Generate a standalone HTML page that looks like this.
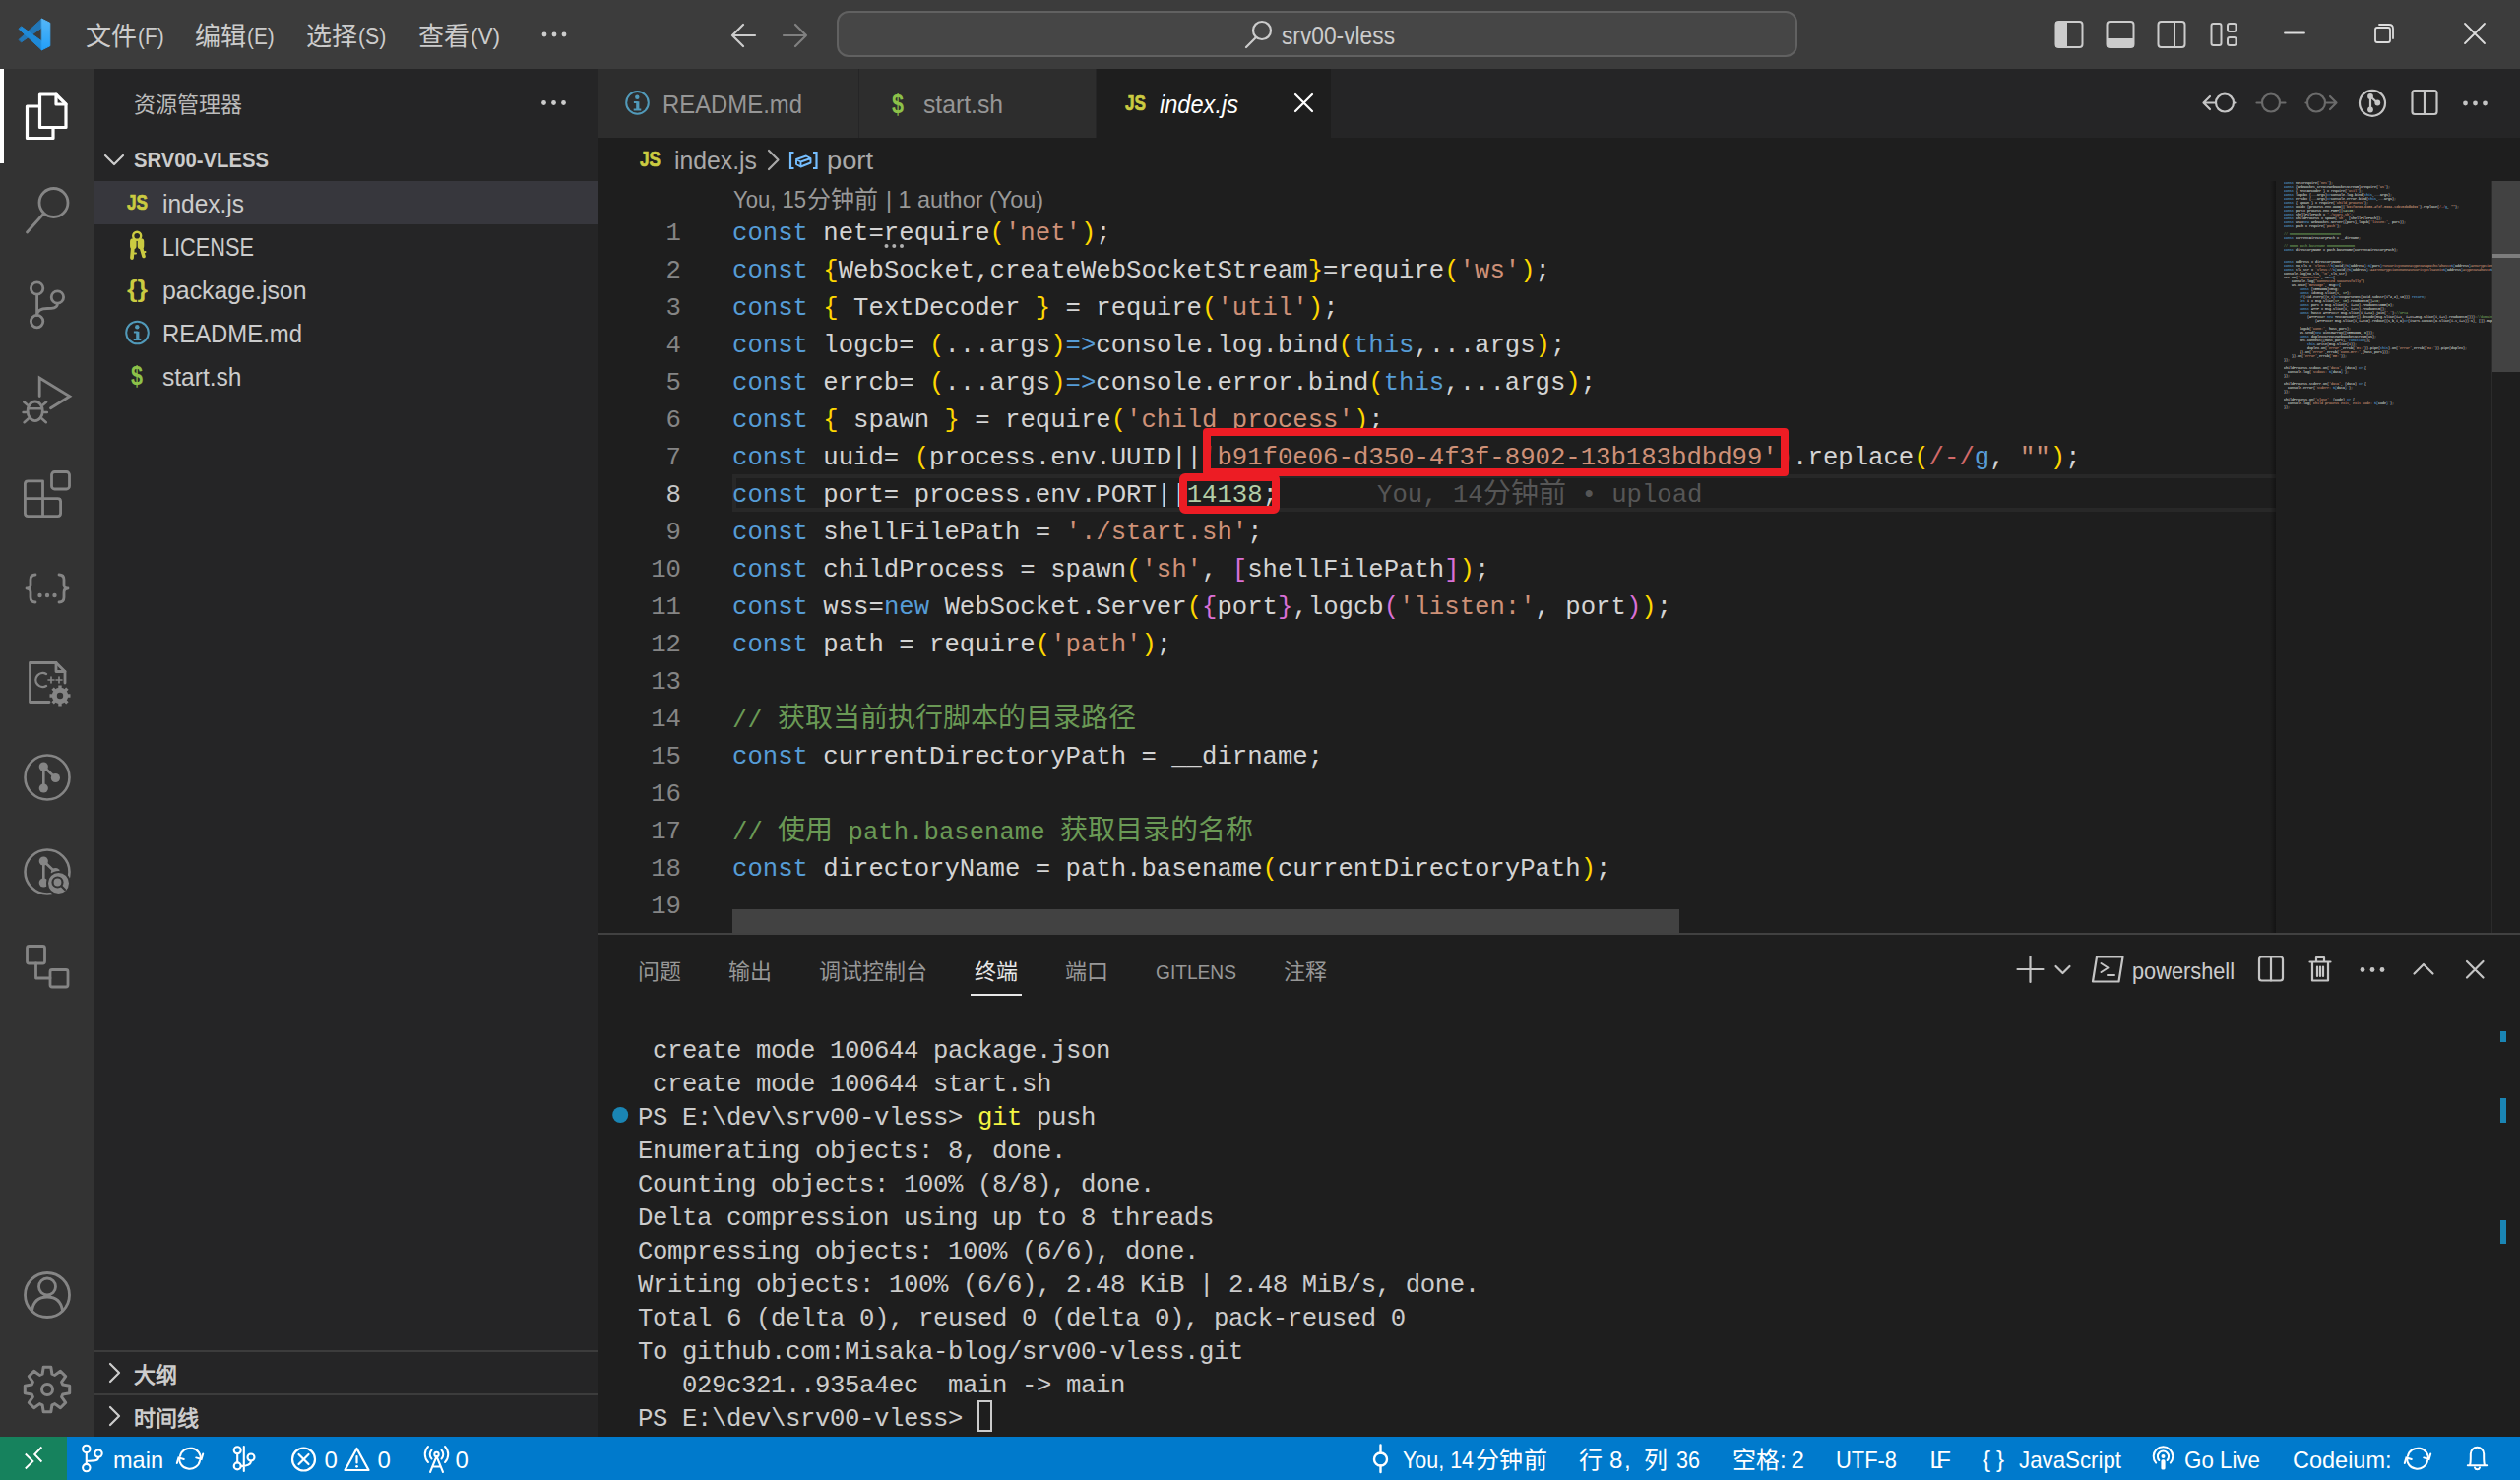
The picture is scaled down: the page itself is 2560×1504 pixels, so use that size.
<!DOCTYPE html>
<html lang="zh-CN"><head><meta charset="utf-8"><title>index.js - srv00-vless - Visual Studio Code</title>
<style>
*{margin:0;padding:0;box-sizing:border-box}
html,body{width:2560px;height:1504px;overflow:hidden;background:#1e1e1e}
body{position:relative;font-family:"Liberation Sans",sans-serif;color:#ccc}
.r{position:absolute}
.t{position:absolute;height:40px;line-height:40px;white-space:pre}
.c{text-align:justify;text-align-last:justify;overflow:hidden;letter-spacing:0}
.m{font-family:"Liberation Mono",monospace}
#ov{position:absolute;left:0;top:0;width:2560px;height:1504px;pointer-events:none}
.code{position:absolute;left:744px;height:38px;line-height:38px;font-family:"Liberation Mono",monospace;font-size:25.65px;white-space:pre;color:#d4d4d4}
.ln{position:absolute;left:608px;width:84px;text-align:right;height:38px;line-height:38px;font-family:"Liberation Mono",monospace;font-size:25.65px;color:#858585}
.k{color:#569cd6}.s{color:#ce9178}.g{color:#ffd700}.o{color:#da70d6}.cm{color:#6a9955}.n{color:#b5cea8}.rx{color:#d16969}
.cj{display:inline-block;font-size:28px;line-height:38px;text-align:justify;text-align-last:justify;vertical-align:baseline;letter-spacing:0}
.term{position:absolute;left:648px;height:34px;line-height:34px;font-family:"Liberation Mono",monospace;font-size:25.65px;letter-spacing:-0.39px;white-space:pre;color:#ccc}

#mm{position:absolute;left:2320px;top:184px;width:212px;height:764px;overflow:hidden}
#mm>div{transform:scale(0.16667);transform-origin:0 0;width:1400px;font-family:"Liberation Mono",monospace;font-size:20px;line-height:24px;white-space:pre;color:#d4d4d4;font-weight:bold;opacity:.88}
#mm p{height:24px;overflow:hidden}
.b3{color:#179fff}
#mm .g,#mm .o,#mm .b3{color:inherit}
</style></head>
<body>
<div class="r" style="left:0px;top:0px;width:2560px;height:70px;background:#3c3c3c;"></div>
<div class="r" style="left:0px;top:70px;width:96px;height:1390px;background:#333333;"></div>
<div class="r" style="left:96px;top:70px;width:512px;height:1390px;background:#252526;"></div>
<div class="r" style="left:608px;top:70px;width:1952px;height:70px;background:#252526;"></div>
<div class="r" style="left:608px;top:140px;width:1952px;height:808px;background:#1e1e1e;"></div>
<div class="r" style="left:608px;top:948px;width:1952px;height:2px;background:#414141;"></div>
<div class="r" style="left:608px;top:950px;width:1952px;height:510px;background:#1e1e1e;"></div>
<div class="r" style="left:0px;top:1460px;width:2560px;height:44px;background:#007acc;"></div>
<div class="r" style="left:0px;top:1460px;width:68px;height:44px;background:#16825d;"></div>
<span class="t c" style="left:87px;top:16.5px;width:52px;font-size:26px;color:#ccc;">文件</span>
<span class="t" style="left:139.5px;top:17px;font-size:24.5px;color:#ccc;transform:scaleX(0.85);transform-origin:0 50%;">(F)</span>
<span class="t c" style="left:198px;top:16.5px;width:52px;font-size:26px;color:#ccc;">编辑</span>
<span class="t" style="left:250.5px;top:17px;font-size:24.5px;color:#ccc;transform:scaleX(0.85);transform-origin:0 50%;">(E)</span>
<span class="t c" style="left:311px;top:16.5px;width:52px;font-size:26px;color:#ccc;">选择</span>
<span class="t" style="left:363.5px;top:17px;font-size:24.5px;color:#ccc;transform:scaleX(0.87);transform-origin:0 50%;">(S)</span>
<span class="t c" style="left:425px;top:16.5px;width:52px;font-size:26px;color:#ccc;">查看</span>
<span class="t" style="left:477.5px;top:17px;font-size:24.5px;color:#ccc;transform:scaleX(0.92);transform-origin:0 50%;">(V)</span>
<div class="r" style="left:850px;top:11px;width:976px;height:47px;background:#464646;border:2px solid #616161;border-radius:12px"></div>
<span class="t" style="left:1302px;top:16px;font-size:25px;color:#ccc;transform:scaleX(0.9097);transform-origin:0 50%;">srv00-vless</span>
<div class="r" style="left:0px;top:70px;width:4px;height:96px;background:#ffffff;"></div>
<span class="t c" style="left:136px;top:87px;width:110px;font-size:22px;color:#bbb;">资源管理器</span>
<span class="t" style="left:136px;top:143px;font-size:22px;color:#ccc;transform:scaleX(0.9208);transform-origin:0 50%;font-weight:bold;">SRV00-VLESS</span>
<div class="r" style="left:96px;top:184px;width:512px;height:44px;background:#37373d;"></div>
<span class="t" style="left:165px;top:187px;font-size:25px;color:#ccc;transform:scaleX(0.9792);transform-origin:0 50%;">index.js</span>
<span class="t" style="left:165px;top:231px;font-size:25px;color:#ccc;transform:scaleX(0.8693);transform-origin:0 50%;">LICENSE</span>
<span class="t" style="left:165px;top:275px;font-size:25px;color:#ccc;transform:scaleX(0.9945);transform-origin:0 50%;">package.json</span>
<span class="t" style="left:165px;top:319px;font-size:25px;color:#ccc;transform:scaleX(0.9554);transform-origin:0 50%;">README.md</span>
<span class="t" style="left:165px;top:363px;font-size:25px;color:#ccc;transform:scaleX(0.9821);transform-origin:0 50%;">start.sh</span>
<span class="t" style="left:129px;top:186px;font-size:21.5px;color:#cbcb41;font-weight:bold;transform:scaleX(0.8);transform-origin:0 50%;-webkit-text-stroke:0.7px #cbcb41;">JS</span>
<span class="t" style="left:129px;top:273.5px;font-size:24px;color:#cbcb41;transform:scaleX(1.1242);transform-origin:0 50%;font-weight:bold;">{}</span>
<span class="t" style="left:133.3px;top:361.5px;font-size:27px;color:#8dc149;font-weight:bold;transform:scaleX(0.8);transform-origin:0 50%;">$</span>
<div class="r" style="left:96px;top:1372px;width:512px;height:2px;background:#3c3c3c;"></div>
<div class="r" style="left:96px;top:1416px;width:512px;height:2px;background:#3c3c3c;"></div>
<span class="t c" style="left:136px;top:1377.5px;width:44px;font-size:22px;color:#ccc;font-weight:bold;">大纲</span>
<span class="t c" style="left:136px;top:1421.5px;width:66px;font-size:22px;color:#ccc;font-weight:bold;">时间线</span>
<div class="r" style="left:608px;top:70px;width:264px;height:70px;background:#2d2d2d;"></div>
<div class="r" style="left:873px;top:70px;width:240px;height:70px;background:#2d2d2d;"></div>
<div class="r" style="left:1114px;top:70px;width:238px;height:70px;background:#1e1e1e;"></div>
<span class="t" style="left:673px;top:86px;font-size:25px;color:#969696;transform:scaleX(0.9554);transform-origin:0 50%;">README.md</span>
<span class="t" style="left:906px;top:85.5px;font-size:27px;color:#8dc149;font-weight:bold;transform:scaleX(0.8);transform-origin:0 50%;">$</span>
<span class="t" style="left:938px;top:86px;font-size:25px;color:#969696;transform:scaleX(0.9882);transform-origin:0 50%;">start.sh</span>
<span class="t" style="left:1143px;top:85px;font-size:21.5px;color:#cbcb41;font-weight:bold;transform:scaleX(0.8);transform-origin:0 50%;-webkit-text-stroke:0.7px #cbcb41;">JS</span>
<span class="t" style="left:1178px;top:86px;font-size:25px;color:#ffffff;transform:scaleX(0.9438);transform-origin:0 50%;font-style:italic;">index.js</span>
<span class="t" style="left:649.5px;top:142px;font-size:21.5px;color:#cbcb41;font-weight:bold;transform:scaleX(0.8);transform-origin:0 50%;-webkit-text-stroke:0.7px #cbcb41;">JS</span>
<span class="t" style="left:684.5px;top:143px;font-size:25px;color:#a9a9a9;transform:scaleX(0.9910);transform-origin:0 50%;">index.js</span>
<span class="t" style="left:839.5px;top:143px;font-size:25px;color:#a9a9a9;transform:scaleX(1.0911);transform-origin:0 50%;">port</span>
<span class="t" style="left:745px;top:183px;font-size:24px;color:#999;transform:scaleX(0.9189);transform-origin:0 50%;">You, 15</span>
<span class="t c" style="left:820px;top:183px;width:72px;font-size:24px;color:#999;">分钟前</span>
<span class="t" style="left:900px;top:183px;font-size:24px;color:#999;transform:scaleX(0.9749);transform-origin:0 50%;">| 1 author (You)</span>
<div class="r" style="left:744px;top:482px;width:1568px;height:38px;background:transparent;border:4px solid #282828;border-right:0"></div>
<div class="ln" style="top:219px">1</div>
<div class="code" style="top:219px"><span class="k">const</span> net=require<span class="g">(</span><span class="s">'net'</span><span class="g">)</span>;</div>
<div class="ln" style="top:257px">2</div>
<div class="code" style="top:257px"><span class="k">const</span> <span class="g">{</span>WebSocket,createWebSocketStream<span class="g">}</span>=require<span class="g">(</span><span class="s">'ws'</span><span class="g">)</span>;</div>
<div class="ln" style="top:295px">3</div>
<div class="code" style="top:295px"><span class="k">const</span> <span class="g">{</span> TextDecoder <span class="g">}</span> = require<span class="g">(</span><span class="s">'util'</span><span class="g">)</span>;</div>
<div class="ln" style="top:333px">4</div>
<div class="code" style="top:333px"><span class="k">const</span> logcb= <span class="g">(</span>...args<span class="g">)</span><span class="k">=&gt;</span>console.log.bind<span class="g">(</span><span class="k">this</span>,...args<span class="g">)</span>;</div>
<div class="ln" style="top:371px">5</div>
<div class="code" style="top:371px"><span class="k">const</span> errcb= <span class="g">(</span>...args<span class="g">)</span><span class="k">=&gt;</span>console.error.bind<span class="g">(</span><span class="k">this</span>,...args<span class="g">)</span>;</div>
<div class="ln" style="top:409px">6</div>
<div class="code" style="top:409px"><span class="k">const</span> <span class="g">{</span> spawn <span class="g">}</span> = require<span class="g">(</span><span class="s">'child_process'</span><span class="g">)</span>;</div>
<div class="ln" style="top:447px">7</div>
<div class="code" style="top:447px"><span class="k">const</span> uuid= <span class="g">(</span>process.env.UUID||<span class="s">'b91f0e06-d350-4f3f-8902-13b183bdbd99'</span><span class="g">)</span>.replace<span class="g">(</span><span class="rx">/-/</span><span class="k">g</span>, <span class="s">""</span><span class="g">)</span>;</div>
<div class="ln" style="top:485px;color:#c6c6c6">8</div>
<div class="code" style="top:485px"><span class="k">const</span> port= process.env.PORT||<span class="n">14138</span>;</div>
<div class="ln" style="top:523px">9</div>
<div class="code" style="top:523px"><span class="k">const</span> shellFilePath = <span class="s">'./start.sh'</span>;</div>
<div class="ln" style="top:561px">10</div>
<div class="code" style="top:561px"><span class="k">const</span> childProcess = spawn<span class="g">(</span><span class="s">'sh'</span>, <span class="o">[</span>shellFilePath<span class="o">]</span><span class="g">)</span>;</div>
<div class="ln" style="top:599px">11</div>
<div class="code" style="top:599px"><span class="k">const</span> wss=<span class="k">new</span> WebSocket.Server<span class="g">(</span><span class="o">{</span>port<span class="o">}</span>,logcb<span class="o">(</span><span class="s">'listen:'</span>, port<span class="o">)</span><span class="g">)</span>;</div>
<div class="ln" style="top:637px">12</div>
<div class="code" style="top:637px"><span class="k">const</span> path = require<span class="g">(</span><span class="s">'path'</span><span class="g">)</span>;</div>
<div class="ln" style="top:675px">13</div>
<div class="ln" style="top:713px">14</div>
<div class="code" style="top:713px"><span class="cm">// <span class="cj" style="width:364px">获取当前执行脚本的目录路径</span></span></div>
<div class="ln" style="top:751px">15</div>
<div class="code" style="top:751px"><span class="k">const</span> currentDirectoryPath = __dirname;</div>
<div class="ln" style="top:789px">16</div>
<div class="ln" style="top:827px">17</div>
<div class="code" style="top:827px"><span class="cm">// <span class="cj" style="width:56px">使用</span> path.basename <span class="cj" style="width:196px">获取目录的名称</span></span></div>
<div class="ln" style="top:865px">18</div>
<div class="code" style="top:865px"><span class="k">const</span> directoryName = path.basename<span class="g">(</span>currentDirectoryPath<span class="g">)</span>;</div>
<div class="ln" style="top:903px">19</div>
<div class="code" style="top:485px;left:1399px;color:#565656">You, 14</div>
<div class="code" style="top:485px;left:1507px;color:#565656"><span class="cj" style="width:84px">分钟前</span></div>
<div class="code" style="top:485px;left:1591px;color:#565656"> • upload</div>
<div class="r" style="left:1222px;top:434.5px;width:595px;height:49.5px;border:8px solid #ed1c24;border-radius:4px"></div>
<div class="r" style="left:1198px;top:480.5px;width:102px;height:41.5px;border:8px solid #ed1c24;border-radius:6px"></div>
<div class="r" style="left:744px;top:924px;width:962px;height:24px;background:#424242;"></div>
<div class="r" style="left:2306px;top:184px;width:6px;height:764px;background:linear-gradient(to right,rgba(0,0,0,0),rgba(0,0,0,0.35));"></div>
<div class="r" style="left:2532px;top:184px;width:28px;height:194px;background:#424242;"></div>
<div class="r" style="left:2532px;top:258px;width:28px;height:4px;background:#7d7d7d;"></div>
<div class="r" style="left:2531px;top:184px;width:1px;height:764px;background:#2b2b2b;"></div>
<div id="mm"><div><p><span class="k">const</span> net=require<span class="g">(</span><span class="s">'net'</span><span class="g">)</span>;</p><p><span class="k">const</span> <span class="g">{</span>WebSocket,createWebSocketStream<span class="g">}</span>=require<span class="g">(</span><span class="s">'ws'</span><span class="g">)</span>;</p><p><span class="k">const</span> <span class="g">{</span> TextDecoder <span class="g">}</span> = require<span class="g">(</span><span class="s">'util'</span><span class="g">)</span>;</p><p><span class="k">const</span> logcb= <span class="g">(</span>...args<span class="g">)</span><span class="k">=&gt;</span>console.log.bind<span class="g">(</span><span class="k">this</span>,...args<span class="g">)</span>;</p><p><span class="k">const</span> errcb= <span class="g">(</span>...args<span class="g">)</span><span class="k">=&gt;</span>console.error.bind<span class="g">(</span><span class="k">this</span>,...args<span class="g">)</span>;</p><p><span class="k">const</span> <span class="g">{</span> spawn <span class="g">}</span> = require<span class="g">(</span><span class="s">'child_process'</span><span class="g">)</span>;</p><p><span class="k">const</span> uuid= <span class="g">(</span>process.env.UUID||<span class="s">'b91f0e06-d350-4f3f-8902-13b183bdbd99'</span><span class="g">)</span>.replace<span class="g">(</span><span class="rx">/-/</span><span class="k">g</span>, <span class="s">""</span><span class="g">)</span>;</p><p><span class="k">const</span> port= process.env.PORT||<span class="n">14138</span>;</p><p><span class="k">const</span> shellFilePath = <span class="s">'./start.sh'</span>;</p><p><span class="k">const</span> childProcess = spawn<span class="g">(</span><span class="s">'sh'</span>, <span class="o">[</span>shellFilePath<span class="o">]</span><span class="g">)</span>;</p><p><span class="k">const</span> wss=<span class="k">new</span> WebSocket.Server<span class="g">(</span><span class="o">{</span>port<span class="o">}</span>,logcb<span class="o">(</span><span class="s">'listen:'</span>, port<span class="o">)</span><span class="g">)</span>;</p><p><span class="k">const</span> path = require<span class="g">(</span><span class="s">'path'</span><span class="g">)</span>;</p><p></p><p><span class="cm">// mmmmmmmmmmmmmmmmmmmmmmmmmm</span></p><p><span class="k">const</span> currentDirectoryPath = __dirname;</p><p></p><p><span class="cm">// mmmm path.basename mmmmmmmmmmmmmm</span></p><p><span class="k">const</span> directoryName = path.basename<span class="g">(</span>currentDirectoryPath<span class="g">)</span>;</p><p></p><p></p><p><span class="k">const</span> address = directoryName;</p><p><span class="k">const</span> no_tls = <span class="s">`vless://</span><span class="k">${</span>uuid<span class="k">}</span><span class="s">@</span><span class="k">${</span>address<span class="k">}</span><span class="s">:</span><span class="k">${</span>port<span class="k">}</span><span class="s">?security=none&amp;type=ws&amp;path=/&amp;host=</span><span class="k">${</span>address<span class="k">}</span><span class="s">&amp;encryption=none`</span>;</p><p><span class="k">const</span> tls_str = <span class="s">`vless://</span><span class="k">${</span>uuid<span class="k">}</span><span class="s">@</span><span class="k">${</span>address<span class="k">}</span><span class="s">:443?encryption=none&amp;security=tls&amp;sni=</span><span class="k">${</span>address<span class="k">}</span><span class="s">&amp;type=ws&amp;host=</span><span class="k">${</span>address<span class="k">}</span><span class="s">&amp;path=/`</span>;</p><p>console.log<span class="g">(</span>no_tls,<span class="s">'\n'</span>,tls_str<span class="g">)</span></p><p>wss.on<span class="g">(</span><span class="s">'connection'</span>, ws<span class="k">=&gt;</span><span class="o">{</span></p><p>    console.log<span class="b3">(</span><span class="s">"connected successfully"</span><span class="b3">)</span></p><p>    ws.once<span class="b3">(</span><span class="s">'message'</span>, msg<span class="k">=&gt;</span><span class="g">{</span></p><p>        <span class="k">const</span> <span class="o">[</span>VERSION<span class="o">]</span>=msg;</p><p>        <span class="k">const</span> id=msg.slice<span class="o">(</span><span class="n">1</span>, <span class="n">17</span><span class="o">)</span>;</p><p>        <span class="k">if</span><span class="o">(</span>!id.every<span class="b3">(</span><span class="g">(</span>v,i<span class="g">)</span><span class="k">=&gt;</span>v==parseInt<span class="g">(</span>uuid.substr<span class="o">(</span>i*2,2<span class="o">)</span>,16<span class="g">)</span><span class="b3">)</span><span class="o">)</span> <span class="k">return</span>;</p><p>        <span class="k">let</span> i = msg.slice<span class="o">(</span><span class="n">17</span>, <span class="n">18</span><span class="o">)</span>.readUInt8<span class="o">()</span>+<span class="n">19</span>;</p><p>        <span class="k">const</span> port = msg.slice<span class="o">(</span>i, i+=<span class="n">2</span><span class="o">)</span>.readUInt16BE<span class="o">(</span><span class="n">0</span><span class="o">)</span>;</p><p>        <span class="k">const</span> ATYP = msg.slice<span class="o">(</span>i, i+=<span class="n">1</span><span class="o">)</span>.readUInt8<span class="o">()</span>;</p><p>        <span class="k">const</span> host= ATYP==<span class="n">1</span>? msg.slice<span class="o">(</span>i,i+=<span class="n">4</span><span class="o">)</span>.join<span class="o">(</span><span class="s">'.'</span><span class="o">)</span>:<span class="cm">//IPV4</span></p><p>            <span class="o">(</span>ATYP==<span class="n">2</span>? <span class="k">new</span> TextDecoder<span class="b3">()</span>.decode<span class="b3">(</span>msg.slice<span class="g">(</span>i+1, i+=1+msg.slice<span class="o">(</span>i,i+1<span class="o">)</span>.readUInt8<span class="o">()</span><span class="g">)</span><span class="b3">)</span>:<span class="cm">//domain</span></p><p>                <span class="b3">(</span>ATYP==<span class="n">3</span>? msg.slice<span class="g">(</span>i,i+=16<span class="g">)</span>.reduce<span class="g">(</span><span class="o">(</span>s,b,i,a<span class="o">)</span><span class="k">=&gt;</span><span class="o">(</span>i%2?s.concat<span class="b3">(</span>a.slice<span class="g">(</span>i-1,i+1<span class="g">)</span><span class="b3">)</span>:s<span class="o">)</span>, <span class="o">[]</span><span class="g">)</span>.map<span class="g">(</span>b<span class="k">=&gt;</span>b.readUInt16BE(0).toString(16)<span class="g">)</span>.join<span class="g">(</span><span class="s">':'</span><span class="g">)</span>:<span class="s">''</span><span class="b3">)</span><span class="o">)</span>;</p><p></p><p>        logcb<span class="o">(</span><span class="s">'conn:'</span>, host,port<span class="o">)</span>;</p><p>        ws.send<span class="o">(</span><span class="k">new</span> Uint8Array<span class="b3">(</span><span class="g">[</span>VERSION, <span class="n">0</span><span class="g">]</span><span class="b3">)</span><span class="o">)</span>;</p><p>        <span class="k">const</span> duplex=createWebSocketStream<span class="o">(</span>ws<span class="o">)</span>;</p><p>        net.connect<span class="o">(</span><span class="b3">{</span>host,port<span class="b3">}</span>, <span class="k">function</span><span class="b3">()</span><span class="b3">{</span></p><p>            <span class="k">this</span>.write<span class="g">(</span>msg.slice<span class="o">(</span>i<span class="o">)</span><span class="g">)</span>;</p><p>            duplex.on<span class="g">(</span><span class="s">'error'</span>,errcb<span class="o">(</span><span class="s">'E1:'</span><span class="o">)</span><span class="g">)</span>.pipe<span class="g">(</span><span class="k">this</span><span class="g">)</span>.on<span class="g">(</span><span class="s">'error'</span>,errcb<span class="o">(</span><span class="s">'E2:'</span><span class="o">)</span><span class="g">)</span>.pipe<span class="g">(</span>duplex<span class="g">)</span>;</p><p>        <span class="b3">}</span><span class="o">)</span>.on<span class="o">(</span><span class="s">'error'</span>,errcb<span class="b3">(</span><span class="s">'Conn-Err:'</span>,<span class="g">{</span>host,port<span class="g">}</span><span class="b3">)</span><span class="o">)</span>;</p><p>    <span class="g">}</span><span class="b3">)</span>.on<span class="b3">(</span><span class="s">'error'</span>,errcb<span class="g">(</span><span class="s">'EE:'</span><span class="g">)</span><span class="b3">)</span>;</p><p><span class="o">}</span><span class="g">)</span>;</p><p></p><p>childProcess.stdout.on<span class="g">(</span><span class="s">'data'</span>, <span class="o">(</span>data<span class="o">)</span> <span class="k">=&gt;</span> <span class="o">{</span></p><p>  console.log<span class="b3">(</span><span class="s">`stdout: </span><span class="k">${</span>data<span class="k">}</span><span class="s">`</span><span class="b3">)</span>;</p><p><span class="o">}</span><span class="g">)</span>;</p><p></p><p>childProcess.stderr.on<span class="g">(</span><span class="s">'data'</span>, <span class="o">(</span>data<span class="o">)</span> <span class="k">=&gt;</span> <span class="o">{</span></p><p>  console.error<span class="b3">(</span><span class="s">`stderr: </span><span class="k">${</span>data<span class="k">}</span><span class="s">`</span><span class="b3">)</span>;</p><p><span class="o">}</span><span class="g">)</span>;</p><p></p><p>childProcess.on<span class="g">(</span><span class="s">'close'</span>, <span class="o">(</span>code<span class="o">)</span> <span class="k">=&gt;</span> <span class="o">{</span></p><p>  console.log<span class="b3">(</span><span class="s">`Child process exit, exit code: </span><span class="k">${</span>code<span class="k">}</span><span class="s">`</span><span class="b3">)</span>;</p><p><span class="o">}</span><span class="g">)</span>;</p></div></div>
<span class="t c" style="left:648px;top:968px;width:44px;font-size:22px;color:#979797;">问题</span>
<span class="t c" style="left:740px;top:968px;width:44px;font-size:22px;color:#979797;">输出</span>
<span class="t c" style="left:832px;top:968px;width:110px;font-size:22px;color:#979797;">调试控制台</span>
<span class="t c" style="left:990px;top:968px;width:44px;font-size:22px;color:#e7e7e7;">终端</span>
<div class="r" style="left:986px;top:1010px;width:52px;height:2px;background:#e7e7e7;"></div>
<span class="t c" style="left:1082px;top:968px;width:44px;font-size:22px;color:#979797;">端口</span>
<span class="t" style="left:1174px;top:967.5px;font-size:21px;color:#979797;transform:scaleX(0.9125);transform-origin:0 50%;">GITLENS</span>
<span class="t c" style="left:1304px;top:968px;width:44px;font-size:22px;color:#979797;">注释</span>
<span class="t" style="left:2166px;top:966.5px;font-size:24px;color:#ccc;transform:scaleX(0.9065);transform-origin:0 50%;">powershell</span>
<div class="term" style="top:1052px"> create mode 100644 package.json</div>
<div class="term" style="top:1086px"> create mode 100644 start.sh</div>
<div class="term" style="top:1120px">PS E:\dev\srv00-vless&gt; <span style="color:#f5f543">git</span> push</div>
<div class="term" style="top:1154px">Enumerating objects: 8, done.</div>
<div class="term" style="top:1188px">Counting objects: 100% (8/8), done.</div>
<div class="term" style="top:1222px">Delta compression using up to 8 threads</div>
<div class="term" style="top:1256px">Compressing objects: 100% (6/6), done.</div>
<div class="term" style="top:1290px">Writing objects: 100% (6/6), 2.48 KiB | 2.48 MiB/s, done.</div>
<div class="term" style="top:1324px">Total 6 (delta 0), reused 0 (delta 0), pack-reused 0</div>
<div class="term" style="top:1358px">To github.com:Misaka-blog/srv00-vless.git</div>
<div class="term" style="top:1392px">   029c321..935a4ec  main -&gt; main</div>
<div class="term" style="top:1426px">PS E:\dev\srv00-vless&gt; </div>
<div class="r" style="left:2540px;top:1048px;width:6px;height:11px;background:#1a85b4;"></div>
<div class="r" style="left:2540px;top:1116px;width:6px;height:25px;background:#1a85b4;"></div>
<div class="r" style="left:2540px;top:1240px;width:6px;height:24px;background:#1a85b4;"></div>
<span class="t" style="left:115px;top:1464px;font-size:24px;color:#ffffff;transform:scaleX(0.9804);transform-origin:0 50%;">main</span>
<span class="t" style="left:329.5px;top:1464px;font-size:24px;color:#ffffff;">0</span>
<span class="t" style="left:383.5px;top:1464px;font-size:24px;color:#ffffff;">0</span>
<span class="t" style="left:462.5px;top:1464px;font-size:24px;color:#ffffff;">0</span>
<span class="t" style="left:1424.5px;top:1464px;font-size:24px;color:#ffffff;transform:scaleX(0.8941);transform-origin:0 50%;">You, 14</span>
<span class="t c" style="left:1498.5px;top:1464px;width:73px;font-size:24px;color:#ffffff;">分钟前</span>
<span class="t c" style="left:1604px;top:1464px;width:24px;font-size:24px;color:#ffffff;">行</span>
<span class="t" style="left:1635px;top:1464px;font-size:24px;color:#ffffff;">8</span>
<span class="t" style="left:1650px;top:1464px;font-size:24px;color:#ffffff;">,</span>
<span class="t c" style="left:1670px;top:1464px;width:24px;font-size:24px;color:#ffffff;">列</span>
<span class="t" style="left:1703px;top:1464px;font-size:24px;color:#ffffff;transform:scaleX(0.8990);transform-origin:0 50%;">36</span>
<span class="t c" style="left:1760px;top:1464px;width:47px;font-size:24px;color:#ffffff;">空格</span>
<span class="t" style="left:1808px;top:1464px;font-size:24px;color:#ffffff;">:</span>
<span class="t" style="left:1819.5px;top:1464px;font-size:24px;color:#ffffff;">2</span>
<span class="t" style="left:1865px;top:1464px;font-size:24px;color:#ffffff;transform:scaleX(0.9119);transform-origin:0 50%;">UTF-8</span>
<span class="t" style="left:1960.5px;top:1464px;font-size:24px;color:#ffffff;letter-spacing:-6.51px;">LF</span>
<span class="t" style="left:2014px;top:1463px;font-size:24px;color:#ffffff;letter-spacing:5.97px;">{}</span>
<span class="t" style="left:2051px;top:1464px;font-size:24px;color:#ffffff;transform:scaleX(0.9282);transform-origin:0 50%;">JavaScript</span>
<span class="t" style="left:2218.5px;top:1464px;font-size:24px;color:#ffffff;transform:scaleX(0.9310);transform-origin:0 50%;">Go Live</span>
<span class="t" style="left:2328.5px;top:1464px;font-size:24px;color:#ffffff;transform:scaleX(0.9784);transform-origin:0 50%;">Codeium:</span>
<svg id="ov" viewBox="0 0 2560 1504" fill="none" stroke-linecap="round" stroke-linejoin="round">
<defs><linearGradient id="lgR" x1="0" y1="0" x2="0" y2="1"><stop offset="0" stop-color="#54b6f8"/><stop offset="1" stop-color="#229ff8"/></linearGradient></defs>
<g stroke-width="1" stroke-linejoin="round">
<path d="M19.3 40.2 L42.4 19.2 L42.4 28.2 L21.8 42.7 Z" fill="#2277b8" stroke="#2277b8"/>
<path d="M21.8 27.1 L42.4 41.8 L42.4 50.8 L19.3 29.6 Z" fill="#1f8ad8" stroke="#1f8ad8"/>
<path d="M42.6 19.2 L50.800 23.3 L50.800 46.7 L42.6 50.8 Z" fill="url(#lgR)" stroke="url(#lgR)"/>
</g>
<g fill="#ccc" stroke="none"><circle cx="553" cy="35" r="2.4"/><circle cx="563" cy="35" r="2.4"/><circle cx="573" cy="35" r="2.4"/></g>
<path d="M767 36 H744 M755 25 L744 36 L755 47" stroke="#ccc" stroke-width="2.2"/>
<path d="M796 36 H819 M808 25 L819 36 L808 47" stroke="#808080" stroke-width="2.2"/>
<circle cx="1282" cy="31" r="9" stroke="#ccc" stroke-width="2.2"/><path d="M1276 38 L1266 48" stroke="#ccc" stroke-width="2.2"/>
<rect x="2088.5" y="22" width="27" height="26" rx="3" stroke="#ccc" stroke-width="2"/><rect x="2088.5" y="22" width="11.5" height="26" fill="#ccc" stroke="none"/>
<rect x="2140.5" y="22" width="27" height="26" rx="3" stroke="#ccc" stroke-width="2"/><rect x="2140.5" y="39" width="27" height="9" fill="#ccc" stroke="none"/>
<rect x="2192.5" y="22" width="27" height="26" rx="3" stroke="#ccc" stroke-width="2"/><path d="M2209 22 V48" stroke="#ccc" stroke-width="2"/>
<rect x="2246.5" y="24" width="10" height="22" rx="2" stroke="#ccc" stroke-width="2"/><rect x="2263" y="24" width="8.5" height="8" rx="2" stroke="#ccc" stroke-width="2"/><rect x="2263" y="38" width="8.5" height="8" rx="2" stroke="#ccc" stroke-width="2"/>
<path d="M2321 33.5 H2341" stroke="#ddd" stroke-width="1.8"/>
<rect x="2413" y="28" width="15" height="15" rx="2" stroke="#ddd" stroke-width="1.8"/><path d="M2417 25 H2427 Q2431 25 2431 29 V39" stroke="#ddd" stroke-width="1.8"/>
<path d="M2504 24 L2524 44 M2524 24 L2504 44" stroke="#ddd" stroke-width="1.8"/>
<g stroke="#fff" stroke-width="3.2"><path d="M40.5 96 H57 L67 106 V129.5 H40.5 Z"/><path d="M57 96 V106 H67"/><path d="M40.5 108 H27.5 V140.5 H54 V129.5"/></g>
<g stroke="#858585" stroke-width="2.8"><circle cx="54.5" cy="206" r="14.5"/><path d="M44 217.5 L27.5 236"/></g>
<g stroke="#858585" stroke-width="2.8"><circle cx="37.6" cy="293" r="6.2"/><circle cx="37.6" cy="326.6" r="6.2"/><circle cx="58.4" cy="302" r="6.2"/><path d="M37.6 299.500 V320.200"/><path d="M58.4 308.500 C58.4 313.500 53 313.500 48 313.500 C42 313.500 38 315.500 37.6 320"/></g>
<g stroke="#858585" stroke-width="2.8"><path d="M40.2 402.500 V384 L70.800 402.700 L51.5 414.800" stroke-linejoin="miter"/><ellipse cx="35.7" cy="417.8" rx="7.6" ry="9.800"/><path d="M29 415.200 H42.4 M27.8 411.500 L24.3 408.500 M43.6 411.500 L47.1 408.500 M28 419 H23.600 M43.4 419 H47.8 M28.8 425.500 L24.600 429.200 M42.600 425.500 L46.800 429.200" stroke-width="2.600"/></g>
<g stroke="#858585" stroke-width="2.8"><path d="M28.4 488.800 H43.5 V506.700 H58.600 Q61.600 506.700 61.600 509.700 V521.600 Q61.600 524.600 58.600 524.600 H28.4 Q25.4 524.600 25.4 521.600 V491.800 Q25.4 488.800 28.4 488.800 Z"/><path d="M25.4 506.700 H43.5 V524.600"/><rect x="52.5" y="479.5" width="18" height="17.5" rx="3"/></g>
<g stroke="#858585" stroke-width="2.8"><path d="M36 584 Q31 584 31 589 V594 Q31 598 27 598 Q31 598 31 602 V607 Q31 612 36 612"/><path d="M60 584 Q65 584 65 589 V594 Q65 598 69 598 Q65 598 65 602 V607 Q65 612 60 612"/></g><g fill="#858585" stroke="none"><circle cx="40.5" cy="605" r="2.2"/><circle cx="48" cy="605" r="2.2"/><circle cx="55.5" cy="605" r="2.2"/></g>
<g stroke="#858585" stroke-width="2.8"><path d="M50 713.5 H30.5 V673.5 H57 L66 682.5 V694"/><path d="M57 673.5 V682.5 H66"/><path d="M47 685 A7 7 0 1 0 47 697" stroke-width="2.4"/><path d="M49 691 H55 M52 688 V694 M57 691 H63 M60 688 V694" stroke-width="1.6"/></g>
<g stroke="#858585"><circle cx="61" cy="707" r="6" stroke-width="4.5"/><path d="M61 696.5 V717.5 M50.5 707 H71.5 M53.6 699.6 L68.4 714.4 M68.4 699.6 L53.6 714.4" stroke-width="3.4" stroke-linecap="butt"/></g><circle cx="61" cy="707" r="3.2" fill="#333" stroke="none"/>
<g stroke="#858585"><circle cx="48" cy="790" r="22.5" stroke-width="2.6"/><path d="M44.3 779 V801 M44.3 779 L56.4 790.5" stroke-width="2.6"/></g><g fill="#858585" stroke="none"><circle cx="44.3" cy="779" r="4.6"/><circle cx="44.3" cy="801" r="4.6"/><circle cx="56.4" cy="790.5" r="4.6"/></g>
<g stroke="#858585"><circle cx="48" cy="886" r="22.5" stroke-width="2.6"/><path d="M44.3 875 V897 M44.3 875 L56.4 886.5" stroke-width="2.6"/></g><g fill="#858585" stroke="none"><circle cx="44.3" cy="875" r="4.6"/><circle cx="44.3" cy="897" r="4.6"/><circle cx="56.4" cy="886.5" r="4.6"/></g>
<circle cx="59.5" cy="897.5" r="12.5" fill="#333" stroke="none"/><circle cx="59.5" cy="897.5" r="10.5" fill="#858585" stroke="none"/><circle cx="58.5" cy="896.5" r="5" stroke="#333" stroke-width="2.2"/><path d="M62.5 900.5 L66 904" stroke="#333" stroke-width="2.2"/>
<g stroke="#858585" stroke-width="2.8"><rect x="27.5" y="961.5" width="18" height="17.5" rx="2"/><rect x="51" y="985.5" width="18" height="17.5" rx="2"/><path d="M36.5 979 V994 H51"/></g>
<g stroke="#858585" stroke-width="2.8"><circle cx="48" cy="1316" r="22.5"/><circle cx="48" cy="1307.5" r="8.5"/><path d="M32.5 1332 C34 1321 41 1318 48 1318 C55 1318 62 1321 63.5 1332"/></g>
<path d="M43.1 1396.2 L44.2 1389.3 L51.8 1389.3 L52.9 1396.2 L55.7 1397.4 L61.4 1393.3 L66.7 1398.6 L62.6 1404.3 L63.8 1407.1 L70.7 1408.2 L70.7 1415.8 L63.8 1416.9 L62.6 1419.7 L66.7 1425.4 L61.4 1430.7 L55.7 1426.6 L52.9 1427.8 L51.8 1434.7 L44.2 1434.7 L43.1 1427.8 L40.3 1426.6 L34.6 1430.7 L29.3 1425.4 L33.4 1419.7 L32.2 1416.9 L25.3 1415.8 L25.3 1408.2 L32.2 1407.1 L33.4 1404.3 L29.3 1398.6 L34.6 1393.3 L40.3 1397.4 Z" stroke="#858585" stroke-width="3"/><circle cx="48" cy="1412" r="5.5" stroke="#858585" stroke-width="3"/>
<g fill="#ccc" stroke="none"><circle cx="552.5" cy="104.5" r="2.4"/><circle cx="562.5" cy="104.5" r="2.4"/><circle cx="572.5" cy="104.5" r="2.4"/></g>
<path d="M107 158 L116 167 L125 158" stroke="#ccc" stroke-width="2.2"/>
<g stroke="#cbcb41"><circle cx="139.2" cy="239.8" r="4" stroke-width="2.4"/><path d="M135.3 245.500 V250 M143 245.500 V250" stroke-width="6.5"/><path d="M135 250 L134 262" stroke-width="3.8"/><path d="M143 250 L146 260.5" stroke-width="3.6"/><path d="M136 257.500 H138 M145.500 256.500 L147.500 256" stroke-width="2"/></g>
<circle cx="139.5" cy="338" r="11.3" stroke="#519aba" stroke-width="2"/><path d="M139.8 336.8 V345" stroke="#519aba" stroke-width="3.2" stroke-linecap="butt"/><path d="M135.9 337.6 H139.8 M135.7 345 H143.3" stroke="#519aba" stroke-width="2" stroke-linecap="butt"/><circle cx="139.3" cy="332.3" r="2.2" fill="#519aba" stroke="none"/>
<path d="M112 1386 L121 1395 L112 1404" stroke="#ccc" stroke-width="2.2"/>
<path d="M112 1430 L121 1439 L112 1448" stroke="#ccc" stroke-width="2.2"/>
<circle cx="647.5" cy="104.4" r="11.3" stroke="#519aba" stroke-width="2"/><path d="M647.8 103.2 V111.4" stroke="#519aba" stroke-width="3.2" stroke-linecap="butt"/><path d="M643.9 104 H647.8 M643.7 111.4 H651.3" stroke="#519aba" stroke-width="2" stroke-linecap="butt"/><circle cx="647.3" cy="98.7" r="2.2" fill="#519aba" stroke="none"/>
<path d="M1316 96 L1333 113 M1333 96 L1316 113" stroke="#fff" stroke-width="2.2"/>
<g stroke="#c5c5c5" stroke-width="2.2"><circle cx="2260" cy="104.5" r="9"/><path d="M2251 104.5 H2239 M2245 98 L2238.5 104.5 L2245 111 M2269 104.5 H2270.5"/></g>
<g stroke="#6b6b6b" stroke-width="2.2"><circle cx="2307" cy="104.5" r="9"/><path d="M2298 104.5 H2292.5 M2316 104.5 H2321.5"/></g>
<g stroke="#6b6b6b" stroke-width="2.2"><circle cx="2353" cy="104.5" r="9"/><path d="M2344 104.5 H2342.5 M2362 104.5 H2373.5 M2367 98 L2373.5 104.5 L2367 111"/></g>
<circle cx="2410" cy="104.8" r="13" stroke="#c5c5c5" stroke-width="2.2"/><path d="M2408 98 V111.5 M2408 98 L2415 104.5" stroke="#c5c5c5" stroke-width="2.2"/><g fill="#c5c5c5" stroke="none"><circle cx="2408" cy="98" r="2.9"/><circle cx="2408" cy="111.5" r="2.9"/><circle cx="2415.3" cy="104.5" r="2.9"/></g>
<rect x="2450.5" y="92" width="25" height="24" rx="2.5" stroke="#c5c5c5" stroke-width="2.2"/><path d="M2463 92 V116" stroke="#c5c5c5" stroke-width="2.2"/>
<g fill="#c5c5c5" stroke="none"><circle cx="2504.5" cy="105" r="2.4"/><circle cx="2514.5" cy="105" r="2.4"/><circle cx="2524.5" cy="105" r="2.4"/></g>
<path d="M781 153 L790.5 162.5 L781 172" stroke="#a9a9a9" stroke-width="2.2"/>
<g stroke="#75beff" stroke-width="2.2" stroke-linejoin="miter" stroke-linecap="butt"><path d="M806.5 155 H803 V171 H806.5 M826 155 H829.5 V171 H826"/></g><g stroke="#75beff" stroke-width="1.9"><path d="M809 162 L819 158.5 L823.500 161 V165.5 L813.500 169.500 L809 167 Z M809 162 L813.500 164.5 L823.500 161 M813.500 164.5 V169.5"/></g>
<g fill="#b0b0b0" stroke="none"><circle cx="900.5" cy="250" r="2"/><circle cx="908.3" cy="250" r="2"/><circle cx="916" cy="250" r="2"/></g>
<path d="M2049.5 985 H2075.5 M2062.5 972 V998" stroke="#c5c5c5" stroke-width="2.2"/>
<path d="M2088.5 982 L2095.5 989 L2102.5 982" stroke="#c5c5c5" stroke-width="2.2"/>
<path d="M2130 972.5 H2156.5 L2152.5 997.5 H2126 Z" stroke="#c5c5c5" stroke-width="2.2"/><path d="M2134.5 979 L2141.5 983.5 L2134.5 988 M2141 991 H2148" stroke="#c5c5c5" stroke-width="2"/>
<rect x="2295" y="972.5" width="24" height="24" rx="2.5" stroke="#c5c5c5" stroke-width="2.2"/><path d="M2307 972.5 V996.5" stroke="#c5c5c5" stroke-width="2.2"/>
<g stroke="#c5c5c5" stroke-width="2.2"><path d="M2346.5 977.5 H2367.5 M2353 977 V973 H2361 V977 M2349 978 V996.5 H2365 V978 M2354 982.5 V992 M2357 982.5 V992 M2360 982.5 V992"/></g>
<g fill="#c5c5c5" stroke="none"><circle cx="2400" cy="985.5" r="2.4"/><circle cx="2410" cy="985.5" r="2.4"/><circle cx="2420" cy="985.5" r="2.4"/></g>
<path d="M2452.5 989.5 L2462 980 L2471.5 989.5" stroke="#c5c5c5" stroke-width="2.2"/>
<path d="M2506 977 L2522.5 993.5 M2522.5 977 L2506 993.5" stroke="#c5c5c5" stroke-width="2.2"/>
<circle cx="630.2" cy="1133" r="8" fill="#1a85b4" stroke="none"/>
<rect x="994" y="1424" width="13" height="30" stroke="#ccc" stroke-width="2" stroke-linejoin="miter"/>
<path d="M25.8 1477.5 L33.4 1485 L25.8 1492.5 M42.4 1470.500 L35.2 1478 L42.4 1485.5" stroke="#fff" stroke-width="1.9" stroke-linejoin="miter" stroke-linecap="butt"/>
<g stroke="#ffffff" stroke-width="2.1"><circle cx="87.8" cy="1472.4" r="3.7"/><circle cx="87.8" cy="1491.6" r="3.7"/><circle cx="100" cy="1477.1" r="3.7"/><path d="M87.8 1476.2 V1487.8 M100 1481 C100 1485 96 1484.5 88 1484.8"/></g>
<g stroke="#ffffff" stroke-width="2" transform="translate(193,1482)"><path d="M-10 -2.200 A10.2 9.600 0 0 1 10.600 1.200"/><path d="M10 2.600 A10.2 9.600 0 0 1 -10.600 -0.800"/><path d="M13.2 -4.600 L11.6 1 L6.200 -0.600 M-13.2 5 L-11.6 -0.600 L-6.200 1" stroke-linejoin="miter"/></g>
<g stroke="#ffffff" stroke-width="2.1"><circle cx="241.2" cy="1473.8" r="3.5"/><circle cx="241.2" cy="1489.9" r="3.5"/><circle cx="255" cy="1481" r="3.5"/><path d="M241.2 1477.5 V1486.200 M247.8 1470 V1495 M255 1484.700 C255 1489 251 1489.9 245 1489.9"/></g>
<g stroke="#ffffff" stroke-width="2.2"><circle cx="308.5" cy="1483" r="11.5"/><path d="M303.5 1478 L313.5 1488 M313.5 1478 L303.5 1488"/></g>
<g stroke="#ffffff" stroke-width="2.2"><path d="M362.5 1472 L374.5 1494 H350.5 Z"/><path d="M362.5 1480 V1486.5"/></g><circle cx="362.5" cy="1490.3" r="1.4" fill="#ffffff" stroke="none"/>
<g stroke="#ffffff" stroke-width="2"><path d="M443.5 1480 L437 1496 M443.5 1480 L450 1496 M439.5 1490.5 H447.5"/><circle cx="443.5" cy="1478" r="2.2"/><path d="M438.5 1473.5 A6.5 6.5 0 0 0 438.5 1482.5 M448.500 1473.5 A6.5 6.5 0 0 1 448.5 1482.5 M435 1470 A11.500 11.500 0 0 0 435 1486 M452 1470 A11.500 11.500 0 0 1 452 1486"/></g>
<g stroke="#ffffff" stroke-width="2.4"><circle cx="1402.5" cy="1483" r="6.5"/><path d="M1402.5 1468.5 V1476.5 M1402.5 1489.500 V1496"/></g>
<g stroke="#ffffff" stroke-width="2"><path d="M2190.200 1486.600 A9.800 9.800 0 1 1 2204.800 1486.600"/><path d="M2193.400 1484 A5.600 5.600 0 1 1 2201.600 1484"/></g><circle cx="2197.500" cy="1479.900" r="2" fill="#ffffff" stroke="none"/><rect x="2195.400" y="1483.300" width="4.200" height="10.200" rx="1.600" fill="#ffffff" stroke="none"/>
<g stroke="#ffffff" stroke-width="2" transform="translate(2456,1482)"><path d="M-10 -2.200 A10.2 9.600 0 0 1 10.600 1.200"/><path d="M10 2.600 A10.2 9.600 0 0 1 -10.600 -0.800"/><path d="M13.2 -4.600 L11.6 1 L6.200 -0.600 M-13.2 5 L-11.6 -0.600 L-6.200 1" stroke-linejoin="miter"/></g>
<g stroke="#ffffff" stroke-width="2"><path d="M2506.800 1489.200 H2526.200 M2509 1489 C2510 1486 2509.800 1482 2509.800 1477.500 A6.700 6.700 0 0 1 2523.200 1477.500 C2523.200 1482 2523 1486 2524 1489 M2514 1491.400 A2.600 2.600 0 0 0 2519 1491.400"/></g>
</svg>
</body></html>
